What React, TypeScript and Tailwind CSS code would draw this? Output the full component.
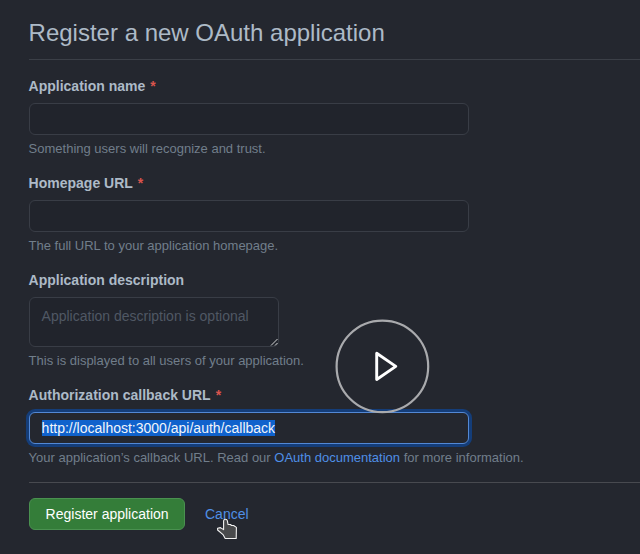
import type { ReactNode } from "react";

function Label({ children, required }: { children: ReactNode; required?: boolean }) {
  return (
    <div className="mb-[6px] h-[21px] whitespace-nowrap text-[14px] leading-[21px] font-bold text-[#adbac7]">
      {children}
      {required && <span className="ml-[5px] text-[#d9544d]">*</span>}
    </div>
  );
}

function Note({ children }: { children: ReactNode }) {
  return (
    <p className="mt-1 h-[19px] whitespace-nowrap text-[13px] leading-[19px] text-[#717e8b]">{children}</p>
  );
}

function PlayButton() {
  return (
    <svg className="absolute top-[318px] left-[334px]" width="97" height="97" viewBox="0 0 97 97" fill="none">
      <circle cx="48.4" cy="48.4" r="45.8" stroke="#a9aaad" strokeWidth="2.2" />
      <path d="M42.7 35.2V61.5L61.8 48.4Z" stroke="#fff" strokeWidth="2.9" strokeLinejoin="round" />
    </svg>
  );
}

function HandCursor() {
  return (
    <svg className="absolute top-[518px] left-[216px]" width="22" height="22" viewBox="0 0 22 22">
      <path
        d="M7.6 11.6V2.9Q7.8 1.2 9.4 1.2T11.4 2.9L12 6.5H14.5L15.5 7.5H17.6L20.4 9.4L20.2 20.5H9.2L7 16.6L1.6 12V10.3L4.4 9.6Z"
        fill="#494a4c"
        stroke="#f2f2f2"
        strokeWidth="1.1"
        strokeLinejoin="round"
      />
    </svg>
  );
}

export default function App() {
  return (
    <main className="relative h-[554px] w-[640px] overflow-hidden bg-[#24272f] pt-[15px] pl-[28.6px] font-['Liberation_Sans',Arial,sans-serif]">
      <h1 className="h-[45px] border-b border-[#3b3f47] text-[24px] leading-[36px] text-[#adbac7]">
        Register a new OAuth application
      </h1>
      <form className="pt-4">
        <div className="mb-[15px]">
          <Label required>Application name</Label>
          <div className="h-8 w-[440px] rounded-[6px] border border-[#393d46] bg-[#21242c]" />
          <Note>Something users will recognize and trust.</Note>
        </div>
        <div className="mb-[15px]">
          <Label required>Homepage URL</Label>
          <div className="h-8 w-[440px] rounded-[6px] border border-[#393d46] bg-[#21242c]" />
          <Note>The full URL to your application homepage.</Note>
        </div>
        <div className="mb-[15px]">
          <Label>Application description</Label>
          <div className="relative h-[50px] w-[250px] rounded-[6px] border border-[#393d46] bg-[#21242c] px-3 pt-2 text-[14px] leading-[21px] whitespace-nowrap text-[#505864]">
            Application description is optional
            <svg className="absolute right-0 bottom-0" width="8" height="8" viewBox="0 0 8 8">
              <path d="M1 7.5L7.5 1M5 7.5L7.5 5" stroke="#d5d5d5" strokeWidth="1" />
            </svg>
          </div>
          <Note>This is displayed to all users of your application.</Note>
        </div>
        <div>
          <Label required>Authorization callback URL</Label>
          <div className="flex h-8 w-[440px] items-center rounded-[6px] border border-[#5388d4] bg-[#24272f] px-3 text-[14px] shadow-[0_0_0_3px_#143d79]">
            <span className="bg-[#1062cc] leading-4 text-[#f0f5fb]">http://localhost:3000/api/auth/callback</span>
          </div>
          <Note>
            Your application’s callback URL. Read our <a className="text-[#4f8fe6]">OAuth documentation</a> for more information.
          </Note>
        </div>
        <div className="mt-[15px] flex items-center border-t border-[#484a50] pt-[15px]">
          <button
            type="button"
            className="h-8 w-[156px] rounded-[6px] border border-[#4a9150] bg-[#347d39] pl-[1px] text-[14px] whitespace-nowrap text-white"
          >
            Register application
          </button>
          <a className="ml-[20.4px] text-[14px] text-[#4f8fe6]">Cancel</a>
        </div>
      </form>
      <PlayButton />
      <HandCursor />
    </main>
  );
}
